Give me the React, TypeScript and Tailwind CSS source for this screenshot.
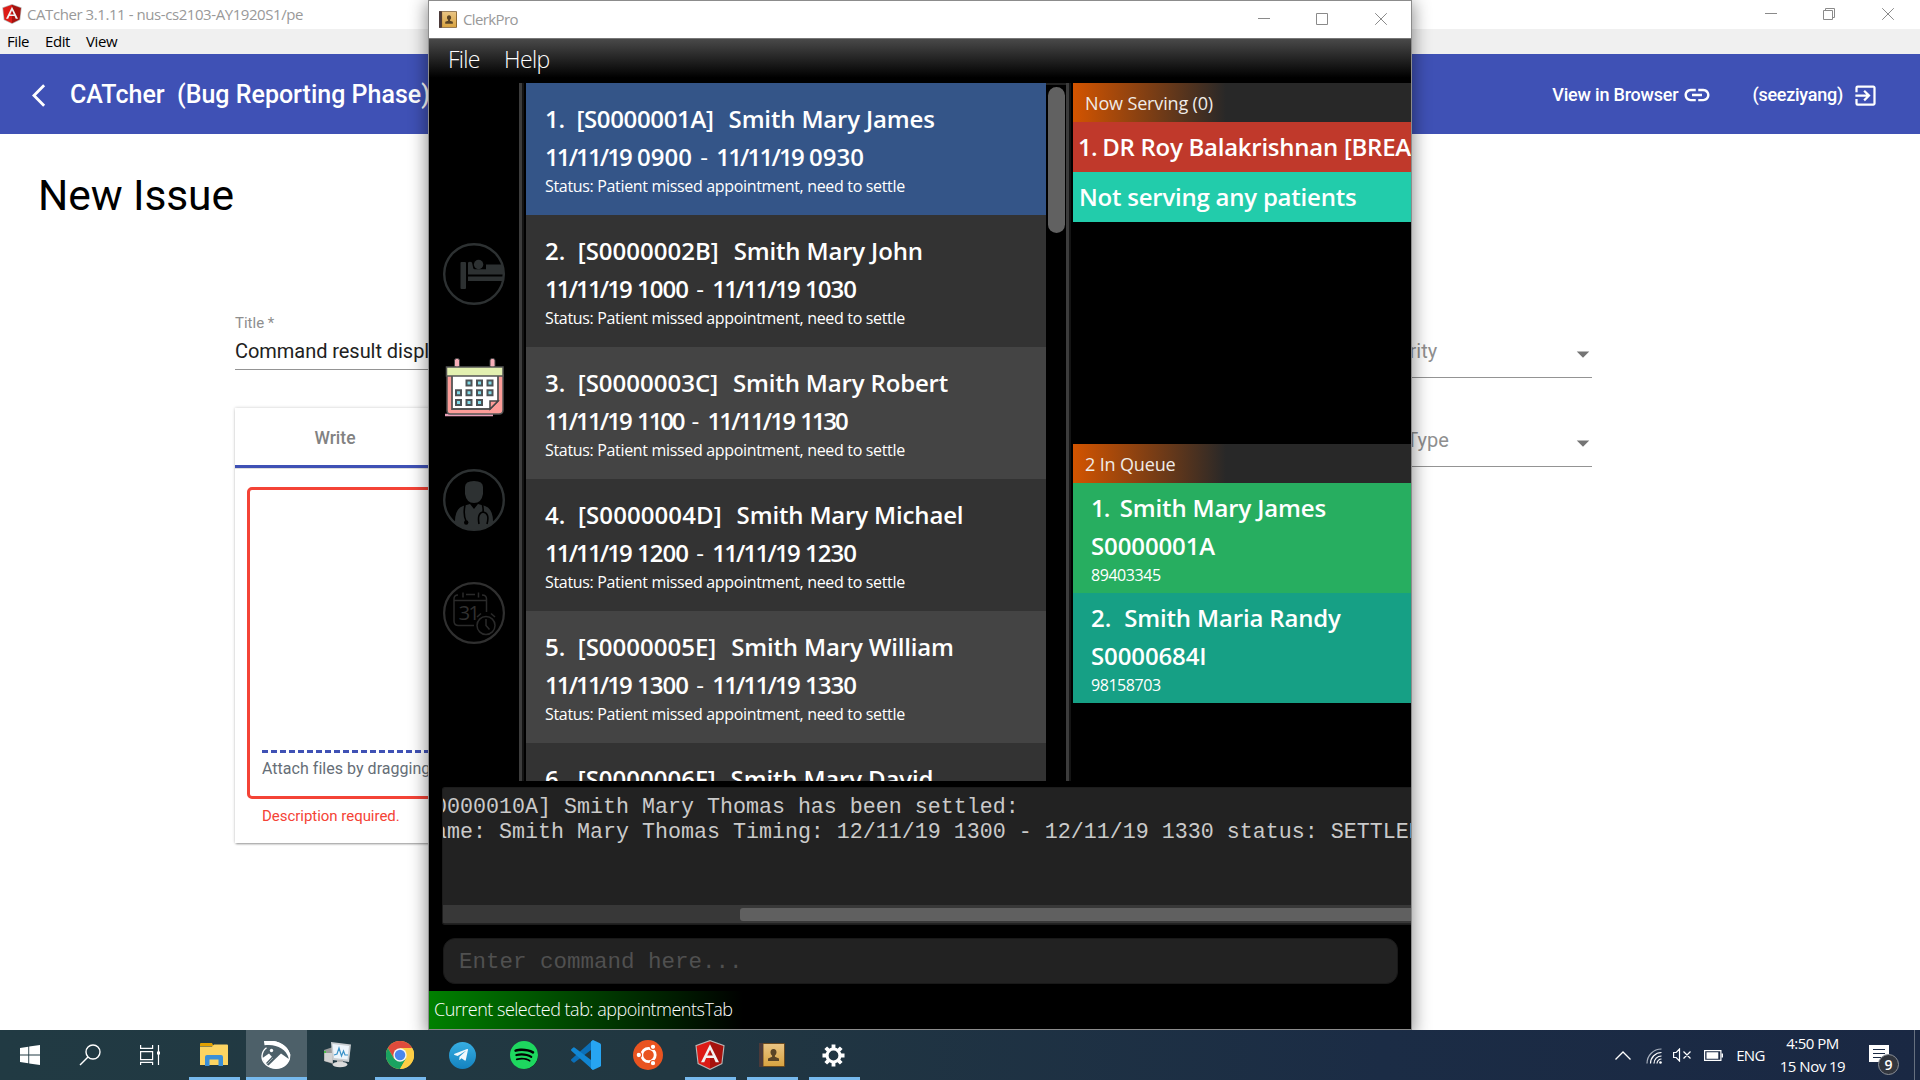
import type { ReactNode } from "react";
import { MdArrowBackIos, MdArrowDropDown, MdExitToApp, MdLink } from "react-icons/md";
import { SiSpotify } from "react-icons/si";
import { FaTelegramPlane } from "react-icons/fa";

type Appointment = {
  no: number;
  id: string;
  name: string;
  from?: string;
  to?: string;
  timeClass?: string;
  rowClass: string;
  idClass?: string;
};

const appointments: Appointment[] = [
  { no: 1, id: "S0000001A", name: "Smith Mary James", from: "0900", to: "0930", rowClass: "bg-[#345588]", idClass: "tracking-[-0.34px]" },
  { no: 2, id: "S0000002B", name: "Smith Mary John", from: "1000", to: "1030", timeClass: "tracking-[-1px]", rowClass: "bg-[#333333]" },
  { no: 3, id: "S0000003C", name: "Smith Mary Robert", from: "1100", to: "1130", timeClass: "tracking-[-2.2px]", rowClass: "bg-[#444444]" },
  { no: 4, id: "S0000004D", name: "Smith Mary Michael", from: "1200", to: "1230", timeClass: "tracking-[-1px]", rowClass: "bg-[#333333]", idClass: "tracking-[0.08px]" },
  { no: 5, id: "S0000005E", name: "Smith Mary William", from: "1300", to: "1330", timeClass: "tracking-[-1px]", rowClass: "bg-[#444444]" },
  { no: 6, id: "S0000006F", name: "Smith Mary David", rowClass: "bg-[#333333]" },
];

function AngularShield({ className }: { className: string }) {
  return (
    <svg viewBox="0 0 30 30" className={className}>
      <path d="M15 0 29.6 5.2 27.4 24 15 30 2.6 24 .4 5.2Z" fill="#b9b9b9" />
      <path d="M15 1.2 28.4 6 26.4 23.2 15 28.8Z" fill="#a6120d" />
      <path d="M15 1.2 1.6 6 3.6 23.2 15 28.8Z" fill="#dd1b16" />
      <path d="M15 4.3 6 22.2h3.3l1.8-4.2h7.7l1.8 4.2H24Zm0 5.4 2.8 5.9h-5.6Z" fill="#f2f2f2" />
    </svg>
  );
}

function AddressBook({ className }: { className: string }) {
  return (
    <svg viewBox="0 0 26 24" className={className}>
      <defs>
        <linearGradient id="cover" x1="0" y1="0" x2="0" y2="1">
          <stop offset="0" stopColor="#e9c483" />
          <stop offset="1" stopColor="#d9a441" />
        </linearGradient>
      </defs>
      <rect x="0" y="0" width="26" height="24" rx="1" fill="#6b4a1f" />
      <rect x="0" y="0" width="4" height="24" fill="#4b3a3a" />
      <rect x="4.5" y="1" width="20.5" height="22" fill="url(#cover)" />
      <path d="M14.5 6c2.2 0 3 1.5 3 3.3 0 1.6-.8 2.6-1.6 3.2v1.3l4.1 1.6V18H9v-2.600l4.100-1.600v-1.300c-.8-.6-1.600-1.600-1.600-3.200C11.500 7.500 12.300 6 14.500 6Z" fill="#5a4426" />
    </svg>
  );
}

function WindowButtons({ restored, className }: { restored?: boolean; className: string }) {
  return (
    <div className={className}>
      <svg viewBox="0 0 12 12" className="h-3 w-3" stroke="#8a8a8a" fill="none">
        <path d="M0 5.500h12" />
      </svg>
      <svg viewBox="0 0 12 12" className="mr-px h-3 w-3" stroke="#8a8a8a" fill="none">
        {restored ? <path d="M.5 2.500h9v9h-9zM2.500 2.500v-2h9v9h-2" /> : <path d="M.5.5h11v11H.5z" />}
      </svg>
      <svg viewBox="0 0 12 12" className="h-3 w-3" stroke="#8a8a8a" fill="none">
        <path d="M.2.2l11.600 11.600M11.800.2.2 11.800" />
      </svg>
    </div>
  );
}

function SelectField({ label }: { label: string }) {
  return (
    <div className="flex h-[42px] w-[225px] items-start border-b border-[#949494]">
      <span className="flex-1 whitespace-nowrap text-[20px] leading-[30px] text-[#8f8f8f]">{label}</span>
      <MdArrowDropDown className="mt-[3px] -mr-[6px] h-[30px] w-[30px] text-[#757575]" />
    </div>
  );
}

function CatcherWindow() {
  return (
    <div className="flex h-[1030px] flex-col bg-white font-['Roboto',sans-serif]">
      <div className="flex h-[29px] items-center font-['Open_Sans',sans-serif] text-[15px] text-[#999999]">
        <AngularShield className="ml-[2px] -mt-[2px] h-5 w-5" />
        <span className="ml-[5px] tracking-[-0.43px]">CATcher 3.1.11 - nus-cs2103-AY1920S1/pe</span>
        <WindowButtons restored className="mr-[26px] -mt-px ml-auto flex gap-[46px]" />
      </div>
      <div className="flex h-[25px] items-center bg-[#f0f0f0] font-['Open_Sans',sans-serif] text-[15px] tracking-[-0.4px] text-black">
        <span className="ml-[7px] w-[38px]">File</span>
        <span className="w-[41px]">Edit</span>
        <span>View</span>
      </div>
      <div className="flex h-20 items-center bg-[#3f51b5] font-medium text-white">
        <MdArrowBackIos className="mt-[2px] ml-[32px] h-[27px] w-[27px]" />
        <span className="mt-[2px] ml-[11px] whitespace-pre text-[25px]">CATcher  (Bug Reporting Phase)</span>
        <span className="ml-auto text-[18px] tracking-[-0.2px]">View in Browser</span>
        <MdLink className="mt-[2px] mr-[40px] ml-[4px] h-[30px] w-[30px]" />
        <span className="text-[18px] tracking-[-0.25px]">(seeziyang)</span>
        <MdExitToApp className="mt-[2px] mr-[41px] ml-[9px] h-[27px] w-[27px]" />
      </div>
      <h1 className="mt-[37px] ml-[38px] text-[42.5px] leading-[50px] tracking-[-0.1px] text-black">New Issue</h1>
      <div className="mt-[92px] ml-[235px] flex">
        <div className="w-[900px]">
          <div className="text-[15px] leading-5 text-[#8e8e8e]">Title *</div>
          <div className="mt-[3px] h-[34px] border-b border-[#949494] text-[20px] leading-[30px] tracking-[-0.05px] text-[#212121]">
            Command result displ
          </div>
          <div className="mt-[38px] h-[435px] bg-white shadow-[0_2px_2px_-1px_rgba(0,0,0,0.35),0_0_3px_rgba(0,0,0,0.22)]">
            <div className="h-[61px] border-b border-[#dedede]">
              <div className="flex h-[60px] w-[200px] items-center justify-center border-b-[3px] border-[#3f51b5] pt-[3px] text-[17.5px] font-medium text-[#828282]">
                Write
              </div>
              <div className="-mt-[3px] h-[3px] w-full bg-[#3f51b5]" />
            </div>
            <div className="mt-[18px] ml-3 h-[312px] rounded-[5px] border-[3px] border-[#f44336] pt-[260px] pl-3">
              <div className="h-[3px] bg-[repeating-linear-gradient(90deg,#3f51b5_0_6px,transparent_6px_9px)]" />
              <div className="mt-[4px] text-[16px] leading-6 tracking-[0.03px] text-[#666e77]">Attach files by dragging</div>
            </div>
            <div className="mt-[7px] ml-[27px] text-[15px] leading-5 tracking-[-0.03px] text-[#f44336]">Description required.</div>
          </div>
        </div>
        <div className="mt-[23px] ml-[232px] flex flex-col gap-[47px]">
          <SelectField label="Severity" />
          <SelectField label="Bug Type" />
        </div>
      </div>
    </div>
  );
}

function AppointmentRow({ a }: { a: Appointment }) {
  return (
    <div className={`h-[132px] shrink-0 pt-[17px] pl-[19px] text-white ${a.rowClass}`}>
      <div className="flex gap-[15px] whitespace-pre text-[24px] leading-[38px] font-semibold">
        <span className={a.idClass}>{`${a.no}.  [${a.id}]`}</span>
        <span className="tracking-[-0.16px]">{a.name}</span>
      </div>
      {a.from && (
        <>
          <div className="whitespace-pre text-[24px] leading-[38px] font-semibold">
            <span className="tracking-[-1.9px]">11/11/19</span> <span className={a.timeClass}>{a.from}</span>
            <span className="px-[2px] font-normal">{" - "}</span>
            <span className="tracking-[-1.8px]">11/11/19</span> <span className={a.timeClass}>{a.to}</span>
          </div>
          <div className="text-[16px] leading-5 tracking-[-0.33px]">Status: Patient missed appointment, need to settle</div>
        </>
      )}
    </div>
  );
}

function Divider() {
  return (
    <div className="flex w-[7px] shrink-0">
      <div className="w-[3px] bg-[#3c3c3c]" />
      <div className="w-[2px] bg-[#141414]" />
    </div>
  );
}

function PanelHeader({ children }: { children: ReactNode }) {
  return (
    <div className="h-[39px] bg-[linear-gradient(90deg,#d35400,#282828_45%)] pl-3 text-[18px] leading-[40px] tracking-[-0.15px] text-[#f0ece8]">
      {children}
    </div>
  );
}

type QueueCardProps = { no: string; noClass?: string; name: string; id: string; phone: string; className: string };

function QueueCard({ no, noClass, name, id, phone, className }: QueueCardProps) {
  return (
    <div className={`h-[110px] pt-[6px] pl-[18px] whitespace-pre text-white ${className}`}>
      <div className="text-[24px] leading-[38px] font-semibold tracking-[-0.16px]">
        <span className={noClass}>{`${no}.  `}</span>
        {name}
      </div>
      <div className="text-[24px] leading-[38px] font-semibold tracking-[-0.12px]">{id}</div>
      <div className="text-[16px] leading-5 tracking-[-0.45px]">{phone}</div>
    </div>
  );
}

function Sidebar() {
  return (
    <div className="flex w-[90px] shrink-0 flex-col items-center pt-[160px]">
      <svg viewBox="0 0 62 62" className="h-[62px] w-[62px]" fill="#2d3132">
        <circle cx="31" cy="31" r="29.800" fill="none" stroke="#2d3132" strokeWidth="2.400" />
        <rect x="17.500" y="19" width="5.500" height="27" rx="1" />
        <path d="M25 19.500q2-1.500 4 0l1.200 5.500q.3 1.300 1.500 1.300H43V21.500h17v10H25Z" />
        <circle cx="35.600" cy="21.500" r="4.700" />
        <rect x="25" y="33.500" width="35" height="4.500" />
      </svg>
      <svg viewBox="0 0 62 62" className="mt-[50px] mr-px h-[62px] w-[62px]">
        <rect x="11.500" y="3.500" width="5" height="9" rx="2" fill="#f7aeb8" stroke="#444" strokeWidth="1" />
        <rect x="47" y="3.500" width="5" height="9" rx="2" fill="#f7aeb8" stroke="#444" strokeWidth="1" />
        <path d="M2 60h48" stroke="#e9a0b8" strokeWidth="2.500" />
        <path d="M4 20h56v35q0 4-4 4H7q-3 0-3-4Z" fill="#fd9c98" stroke="#555" strokeWidth="1.500" />
        <path d="M9 20h46v26l-8 8H9Z" fill="#fff" stroke="#555" strokeWidth="1.800" />
        <path d="M55 46h-8v8Z" fill="#fd9c98" stroke="#444" strokeWidth="1.500" />
        <rect x="3.500" y="12" width="56.500" height="9" fill="#e3f0b0" stroke="#555" strokeWidth="1.500" />
        <g fill="#7fd8e6" stroke="#4c5255" strokeWidth="2">
          <path d="M23.500 25.500h5v5h-5zM34 25.500h5v5h-5zM44.500 25.500h5v5h-5z" />
          <path d="M13 35.200h5v5h-5zM23.500 35.200h5v5h-5zM34 35.200h5v5h-5zM44.500 35.200h5v5h-5z" />
          <path d="M13 45h5v5h-5zM23.500 45h5v5h-5zM34 45h5v5h-5z" />
        </g>
      </svg>
      <svg viewBox="0 0 62 62" className="mt-[52px] h-[62px] w-[62px]" fill="#2d3132">
        <circle cx="31" cy="31" r="29.800" fill="none" stroke="#2d3132" strokeWidth="2.400" />
        <path d="M22 18q0-6 9-6t9 6v7q-1.500 9-9 9t-9-9Z" />
        <path d="M12 54q-.5-14 8-17l7-2 4 5 4-5 7 2q8.500 3 8 17-9 7-19 7t-19-7Z" />
        <g fill="none" stroke="#000" strokeWidth="1.600">
          <path d="M22 36q-2 10 1 16M39.500 36q1 4 .5 7M36 55q-2-11 4-12 7 1 4 12" />
        </g>
        <circle cx="23.200" cy="53.500" r="2.200" fill="#000" />
      </svg>
      <svg viewBox="0 0 62 62" className="mt-[51px] h-[62px] w-[62px]" fill="none" stroke="#2a2a2a" strokeWidth="1.500">
        <circle cx="31" cy="31" r="29.900" strokeWidth="2.200" stroke="#303030" />
        <path d="M15 13q-4 0-4 4v22q0 4.500 4.500 4.500H31M39 13q4.500 0 4.500 4v13M11 18.500h32.500M20 10.500v5M35.500 10.500v5M23 12.500h9" />
        <text x="15.500" y="38" fontSize="20.500" fill="#303030" stroke="none" fontFamily="Open Sans, sans-serif" letterSpacing="-2">
          31
        </text>
        <circle cx="43" cy="43.500" r="9" />
        <path d="M43 37v6.500l3.500 4M34 35l4-3.500M52 35l-4-3.500" />
      </svg>
    </div>
  );
}

function ClerkProWindow() {
  return (
    <div className="absolute top-0 left-[428px] flex h-[1030px] w-[984px] flex-col overflow-hidden border border-[#8c8c8c] bg-black font-['Open_Sans',sans-serif] shadow-[0_4px_16px_2px_rgba(0,0,0,0.42)]">
      <div className="flex h-[37px] shrink-0 items-center bg-white text-[15px] text-[#999999]">
        <AddressBook className="ml-[10px] h-[17px] w-[18px]" />
        <span className="ml-[6px] tracking-[-0.62px]">ClerkPro</span>
        <WindowButtons className="-mt-px mr-[24px] ml-auto flex gap-[46px]" />
      </div>
      <div className="flex h-[45px] shrink-0 border-t border-[#777777] bg-[linear-gradient(180deg,#494949,#000_88%)] pl-[19px] text-[23px] leading-[41px] font-light text-white">
        <span className="w-[56px] tracking-[-0.7px]">File</span>
        <span className="tracking-[-0.6px]">Help</span>
      </div>

      <div className="flex h-[698px] shrink-0 overflow-hidden">
        <Sidebar />
        <Divider />
        <div className="flex w-[520px] shrink-0 flex-col overflow-hidden">
          {appointments.map((a) => (
            <AppointmentRow key={a.no} a={a} />
          ))}
        </div>
        <div className="w-5 shrink-0 border-t-2 border-[#222222] pt-[2px] pl-[2px]">
          <div className="h-[146px] w-[17px] rounded-full bg-[#616161]" />
        </div>
        <Divider />
        <div className="w-[340px] shrink-0 overflow-hidden">
          <div className="h-[361px] whitespace-nowrap text-white">
            <PanelHeader>Now Serving (0)</PanelHeader>
            <div className="h-[50px] bg-[#c0392b] pl-[5px] text-[24px] leading-[49px] font-semibold tracking-[-0.26px]">
              <span className="tracking-[-0.8px]">1. </span>DR Roy Balakrishnan [BREAK]
            </div>
            <div className="h-[50px] bg-[#22ccab] pl-[6px] text-[24px] leading-[49px] font-semibold tracking-[-0.23px]">Not serving any patients</div>
          </div>
          <PanelHeader>2 In Queue</PanelHeader>
          <QueueCard no="1" noClass="tracking-[-1px]" name="Smith Mary James" id="S0000001A" phone="89403345" className="bg-[#27ae60]" />
          <QueueCard no="2" noClass="tracking-[0.1px]" name="Smith Maria Randy" id="S0000684I" phone="98158703" className="bg-[#16a085]" />
        </div>
      </div>

      <div className="mt-[6px] ml-[13px] flex h-[138px] shrink-0 flex-col overflow-hidden rounded-l-[3px] border border-r-0 border-[#1c1c1c] bg-[#222222]">
        <div className="-ml-[35px] h-[117px] pt-[7px] font-['Liberation_Mono',monospace] text-[21.67px] leading-[25px] whitespace-pre text-[#cacaca]">
          <div>[S0000010A] Smith Mary Thomas has been settled:</div>
          <div>{" Name: Smith Mary Thomas Timing: 12/11/19 1300 - 12/11/19 1330 status: SETTLED"}</div>
        </div>
        <div className="flex h-[18px] items-center bg-[#383838]">
          <div className="ml-[297px] h-[13px] flex-1 rounded-l-[3px] bg-[#606060]" />
        </div>
      </div>

      <div className="mt-[13px] ml-[14px] flex h-[46px] w-[955px] shrink-0 items-center rounded-xl border border-[#191919] bg-[#222222] pt-[4px] pl-[15px] font-['Liberation_Mono',monospace] text-[22.5px] text-[#505050]">
        Enter command here...
      </div>

      <div className="mt-[7px] h-[38px] shrink-0 bg-[linear-gradient(90deg,#008000,#000_32%)] pl-[5px] text-[18px] leading-[36px] font-light tracking-[-0.5px] text-white">
        Current selected tab: appointmentsTab
      </div>
    </div>
  );
}

function TaskItem({ children, open, active }: { children: ReactNode; open?: boolean; active?: boolean }) {
  return (
    <div className="flex h-[50px] w-[62px] flex-col items-center">
      <div className={active ? "flex h-[47px] w-[61px] items-center justify-center bg-[#4d6069] pt-[3px]" : "flex h-[47px] w-full items-center justify-center pt-[3px]"}>
        {children}
      </div>
      {active && <div className="h-[3px] w-[61px] bg-[#76b9ed]" />}
      {open && <div className="h-[3px] w-[51px] bg-[#76b9ed]" />}
    </div>
  );
}

function Taskbar() {
  return (
    <div className="flex h-[50px] items-center bg-[linear-gradient(90deg,#213a43,#213741_35%,#1b2c45_72%,#1a2843)] font-['Open_Sans',sans-serif] text-[15px] text-white">
      <div className="flex w-[60px] justify-center">
        <svg viewBox="0 0 20 20" className="h-5 w-5" fill="#fff">
          <path d="M0 2.900 8.300 1.700v7.800H0zM9.200 1.500 20 0v9.500H9.200zM0 10.400h8.300v7.900L0 17.100zM9.200 10.400H20V20L9.200 18.400z" />
        </svg>
      </div>
      <div className="flex w-[60px] justify-center">
        <svg viewBox="0 0 22 22" className="h-[22px] w-[22px]" fill="none" stroke="#fff" strokeWidth="1.400">
          <circle cx="14" cy="8" r="7" />
          <path d="M9 13 1 21" />
        </svg>
      </div>
      <div className="flex w-[63px] justify-center">
        <svg viewBox="0 0 20 20" className="mr-[3px] h-5 w-5" fill="none" stroke="#fff" strokeWidth="1.200">
          <path d="M.6 0v3.400h12V0M.6 6.600h12v8H.6zM.6 20v-2.600h12V20M18.500 0v20" />
          <path d="M17 6.500h3v3h-3z" fill="#fff" stroke="none" />
        </svg>
      </div>
      <TaskItem open>
        <svg viewBox="0 0 28 24" className="h-6 w-7">
          <path d="M0 1q0-1 1-1h11l1.500 3H0z" fill="#e2a100" />
          <path d="M0 3.500h12L14 1.500h13q1 0 1 1V22H0z" fill="#fcd462" />
          <path d="M5 23V14q0-2 2-2h14q2 0 2 2v9h-4.500v-6.500H9.500V23z" fill="#3a8fd8" />
        </svg>
      </TaskItem>
      <TaskItem active>
        <svg viewBox="0 0 30 28" className="h-7 w-[30px]">
          <path d="M3.500 1.300C13-1.500 25.500 3 28.500 14c.8 7.500-6 13.300-13.500 13.300S.8 22 1 15c.2-3.500 2-6.500 4.500-8.300" fill="none" stroke="#fff" strokeWidth="1.400" />
          <path d="M3 0C14-1.500 26 2 29.500 14l-1.800 3C25 7.500 14.500 2.500 3.500 4.300Z" fill="#fff" />
          <circle cx="10.500" cy="9.500" r="1.700" fill="#fff" />
          <path d="M1.500 17 8 12.500l4 4.500L5.500 24Q1.800 20.500 1.500 17Z" fill="#fff" />
          <path d="M7 25 20 12.500l8.500 6q-3.500 9-13.500 9-4.500 0-8-2.500Z" fill="#fff" />
          <path d="M14 13.500 5.500 22.500" stroke="#4d6069" strokeWidth="1.400" />
        </svg>
      </TaskItem>
      <TaskItem>
        <svg viewBox="0 0 28 26" className="mr-[2px] h-[26px] w-7">
          <path d="M1 8l9-3v17l-9-3z" fill="#9a9a9a" />
          <path d="M1.500 11h8v10l-8-2z" fill="#d2d2d2" />
          <path d="M1 9h2v2H1z" fill="#4fc04a" />
          <path d="M8 0 28 2.500 26 20 9.500 18z" fill="#c9cdd0" />
          <path d="M9.500 2 26 4l-1.500 13.500L11 16z" fill="#eef5fb" />
          <path d="M11 13l3-1 2-6 2.500 8 2-5 1.500 4h3" fill="none" stroke="#3b93c9" strokeWidth="1.200" />
          <path d="M14 18h6v4h-6z" fill="#b5b5b5" />
          <ellipse cx="17" cy="22.500" rx="7.500" ry="2.800" fill="#dcdcdc" />
        </svg>
      </TaskItem>
      <TaskItem open>
        <svg viewBox="0 0 48 48" className="h-7 w-7">
          <circle cx="24" cy="24" r="24" fill="#fdce45" />
          <path d="M24 24 13.500 30 3.200 12A24 24 0 0 1 44.800 12H24Z" fill="#de4b3c" />
          <path d="M3.200 12A24 24 0 0 0 24 48L34.400 30 24 24 13.600 30Z" fill="#1aa260" />
          <path d="M24 12h20.800A24 24 0 0 1 24 48l10.400-18Z" fill="#fdce45" />
          <circle cx="24" cy="24" r="11.500" fill="#f4f4f4" />
          <circle cx="24" cy="24" r="9" fill="#4a86ee" />
        </svg>
      </TaskItem>
      <TaskItem>
        <div className="flex h-[27px] w-[27px] items-center justify-center rounded-full bg-[linear-gradient(180deg,#37aee2,#1482bf)]">
          <FaTelegramPlane className="mr-[2px] h-4 w-4 text-[#f2f8fc]" />
        </div>
      </TaskItem>
      <TaskItem>
        <div className="flex h-[27px] w-[27px] items-center justify-center rounded-full bg-black">
          <SiSpotify className="h-7 w-7 shrink-0 text-[#1ed75f]" />
        </div>
      </TaskItem>
      <TaskItem>
        <svg viewBox="0 0 30 30" className="h-[30px] w-[30px]">
          <path d="M22 0 22 8.500 3.500 22.500Q2.700 23 2 22.300L.3 20.800Q-.3 20 .3 19.300Z" fill="#0b6fb8" />
          <path d="M22 30V21.500L3.500 7.500Q2.700 7 2 7.700L.3 9.200Q-.3 10 .3 10.700Z" fill="#1186d3" />
          <path d="M22 0l7 3.200q1 .5 1 1.600v20.400q0 1.100-1 1.600L22 30l-2-1.500V1.500Z" fill="#27a5f2" />
        </svg>
      </TaskItem>
      <TaskItem>
        <svg viewBox="0 0 30 30" className="h-[30px] w-[30px]">
          <circle cx="15" cy="15" r="15" fill="#e95420" />
          <circle cx="15.500" cy="15" r="6.700" fill="none" stroke="#fff" strokeWidth="2.800" />
          <g fill="#fff" stroke="#e95420" strokeWidth="1.100">
            <circle cx="5.800" cy="15" r="2.700" />
            <circle cx="20" cy="6.800" r="2.700" />
            <circle cx="20" cy="23.200" r="2.700" />
          </g>
        </svg>
      </TaskItem>
      <TaskItem open>
        <AngularShield className="h-[30px] w-[30px]" />
      </TaskItem>
      <TaskItem open>
        <AddressBook className="h-6 w-[26px]" />
      </TaskItem>
      <TaskItem open>
        <svg viewBox="0 0 24 24" className="mr-[2px] h-[23px] w-[23px]" fill="none" stroke="#fff">
          <circle cx="12" cy="12" r="6.700" strokeWidth="3.200" />
          <g strokeWidth="4">
            <path d="M12 .5v4M12 19.500v4M.5 12h4M19.500 12h4M3.900 3.900l2.800 2.800M17.300 17.300l2.800 2.800M3.900 20.100l2.800-2.800M17.300 6.700l2.800-2.800" />
          </g>
        </svg>
      </TaskItem>

      <div className="ml-auto flex h-[50px] items-center">
        <div className="flex w-[30px] justify-center">
          <svg viewBox="0 0 16 9" className="h-[9px] w-4" fill="none" stroke="#fff" strokeWidth="1.300">
            <path d="M.5 8.500 8 1l7.500 7.500" />
          </svg>
        </div>
        <div className="flex w-8 justify-center">
          <svg viewBox="0 0 16 16" className="mt-[2px] h-4 w-4" fill="none" stroke="#fff" strokeWidth="1.200">
            <path d="M1 15.500A14.500 14.500 0 0 1 15.500 1" stroke="#aab2bf" />
            <path d="M4.500 15.500a11 11 0 0 1 11-11M8 15.500A7.500 7.500 0 0 1 15.500 8M11 15.500a4.500 4.500 0 0 1 4.500-4.500" />
            <circle cx="14.500" cy="14.500" r="1.300" fill="#fff" stroke="none" />
          </svg>
        </div>
        <div className="flex w-[26px] justify-center">
          <svg viewBox="0 0 18 14" className="mr-[2px] h-[14px] w-[18px]" fill="none" stroke="#fff" strokeWidth="1.200">
            <path d="M.6 4.500h2.600L6.500 1v12L3.200 9.500H.6zM10.500 3.500l7 7M17.500 3.500l-7 7" />
          </svg>
        </div>
        <div className="flex w-[34px] justify-center">
          <svg viewBox="0 0 19 11" className="h-[11px] w-[19px]">
            <path d="M.6.6h16.300v9.800H.6z" fill="none" stroke="#fff" strokeWidth="1.200" />
            <path d="M2.500 2.300h11.800v6.400H2.500zM17.500 3.500H19v4h-1.500z" fill="#fff" />
          </svg>
        </div>
        <div className="w-[41px] text-center tracking-[-0.6px]">ENG</div>
        <div className="w-[83px] pb-[1px] text-center leading-[23px] tracking-[-0.5px]">
          <div>4:50 PM</div>
          <div>15 Nov 19</div>
        </div>
        <div className="flex h-[50px] w-[60px] pt-[15px] pl-[15px]">
          <svg viewBox="0 0 20 20" className="h-5 w-5 shrink-0">
            <path d="M0 0h20v17h-7l-3 3v-3H0z" fill="#fff" />
            <path d="M4 4.500h12M4 8.500h12M4 12.500h8" stroke="#1b2a44" strokeWidth="1.200" />
          </svg>
          <div className="mt-[9px] -ml-[11px] flex h-[21px] w-[21px] shrink-0 items-center justify-center rounded-full border border-[#8b8f96] bg-[#32363e] text-[14px] font-semibold">
            9
          </div>
        </div>
        <div className="mr-[5px] h-[50px] w-px bg-[#66707f]" />
      </div>
    </div>
  );
}

export default function App() {
  return (
    <div className="relative h-[1080px] w-[1920px] overflow-hidden bg-white">
      <CatcherWindow />
      <ClerkProWindow />
      <div className="relative">
        <Taskbar />
      </div>
    </div>
  );
}
